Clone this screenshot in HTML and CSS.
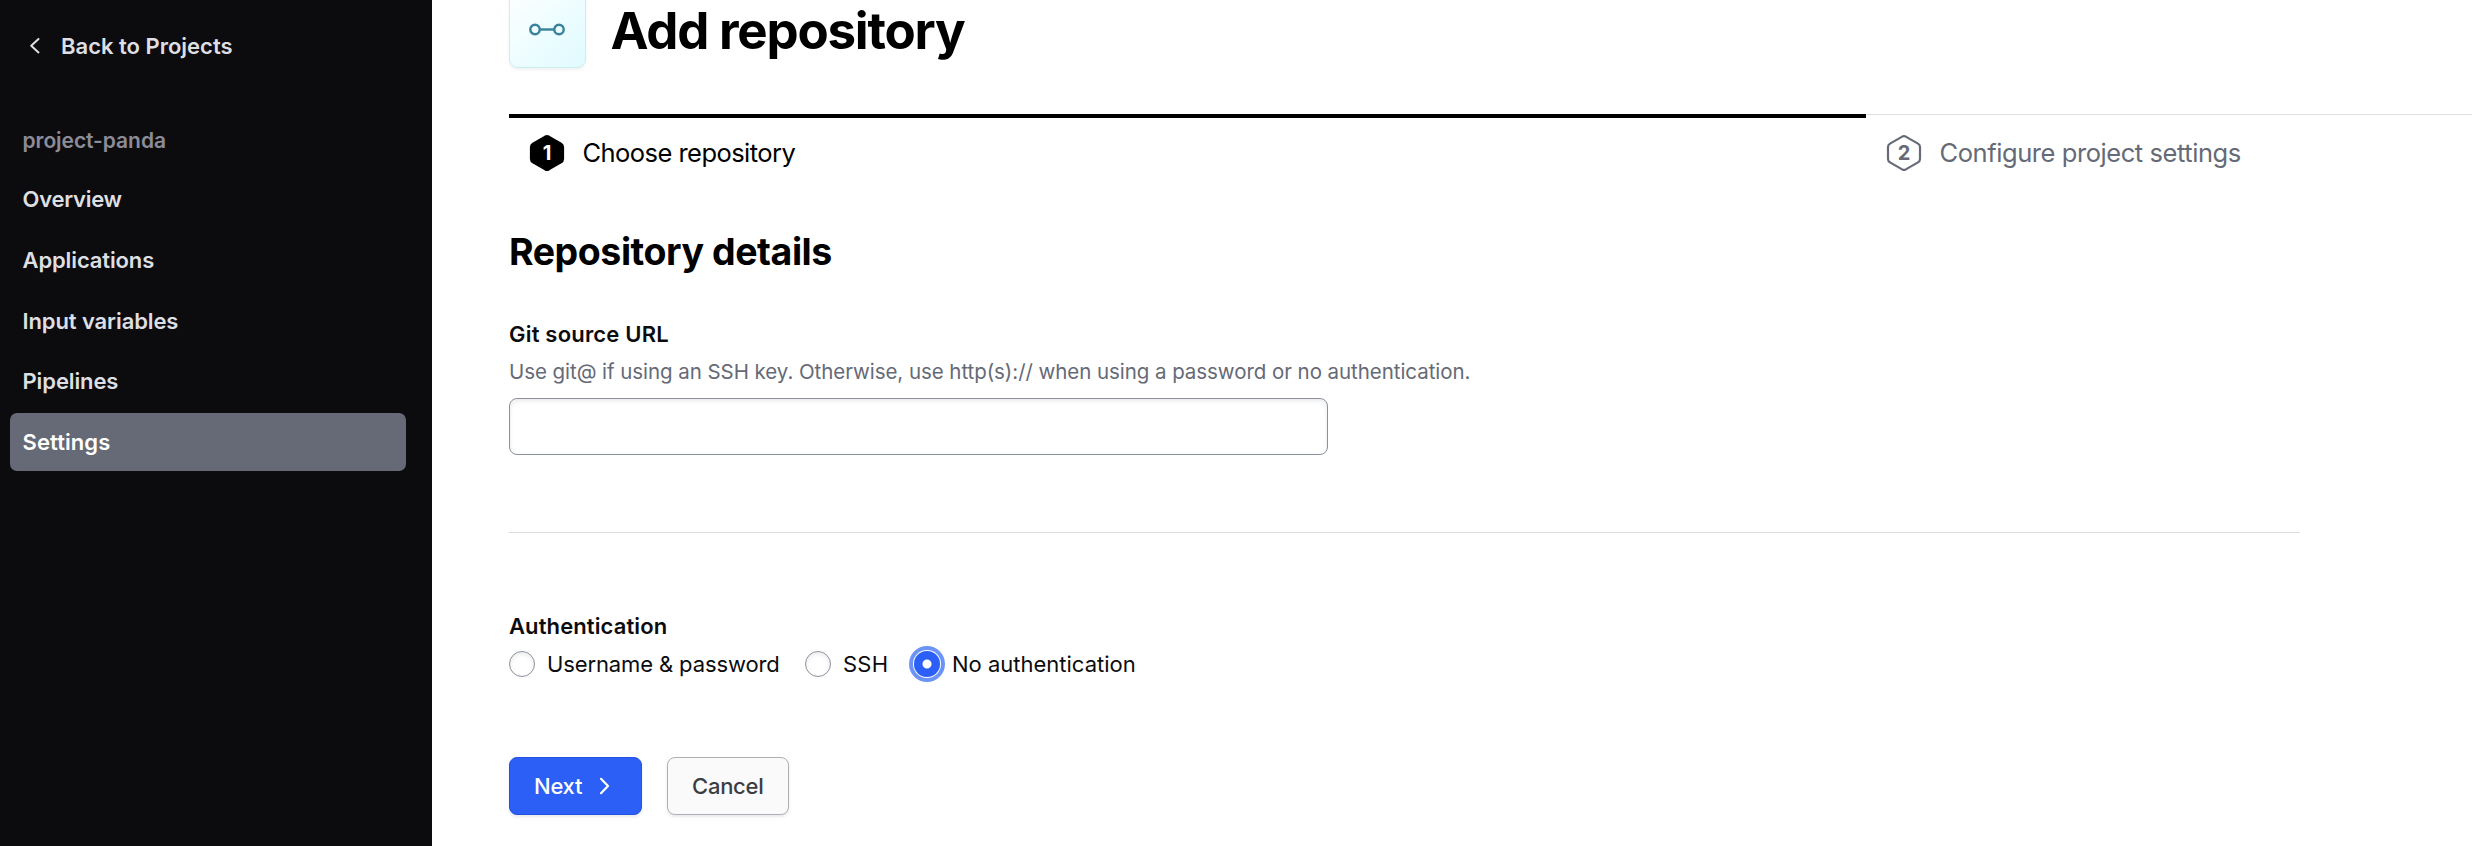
FILE: index.html
```html
<!DOCTYPE html>
<html lang="en">
<head>
<meta charset="utf-8">
<title>Add repository</title>
<link rel="stylesheet" href="styles.css">
</head>
<body>
<div class="app">
  <nav class="sidebar">
    <a class="back"><svg class="back-icon" width="12" height="18" viewBox="0 0 12 18"><path d="M9.5 2 2.2 8.7 9.5 15.4"/></svg><span>Back to Projects</span></a>
    <div class="project">project-panda</div>
    <ul class="menu">
      <li class="item"><span class="t-overview">Overview</span></li>
      <li class="item"><span class="t-apps">Applications</span></li>
      <li class="item"><span class="t-input">Input variables</span></li>
      <li class="item"><span class="t-pipe">Pipelines</span></li>
      <li class="item active"><span class="t-settings">Settings</span></li>
    </ul>
  </nav>
  <main class="main">
    <header class="header">
      <div class="tile"><svg width="36" height="14" viewBox="0 0 36 14"><circle cx="6" cy="6.5" r="4.7"/><circle cx="30" cy="6.5" r="4.7"/><path d="M10.7 6.5h14.6"/></svg></div>
      <h1>Add repository</h1>
    </header>
    <ol class="steps">
      <li class="step current">
        <svg class="hex" width="36" height="38" viewBox="0 0 36 38"><path d="M16.2 2.6a4 4 0 0 1 3.6 0l12.2 7a4 4 0 0 1 2 3.4v12a4 4 0 0 1-2 3.4l-12.2 7a4 4 0 0 1-3.6 0l-12.2-7a4 4 0 0 1-2-3.4v-12a4 4 0 0 1 2-3.4z"/><text x="18" y="25.5">1</text></svg>
        <span>Choose repository</span>
      </li>
      <li class="step">
        <svg class="hex" width="36" height="38" viewBox="0 0 36 38"><path d="M16.2 2.6a4 4 0 0 1 3.6 0l12.2 7a4 4 0 0 1 2 3.4v12a4 4 0 0 1-2 3.4l-12.2 7a4 4 0 0 1-3.6 0l-12.2-7a4 4 0 0 1-2-3.4v-12a4 4 0 0 1 2-3.4z"/><text x="18" y="25.5">2</text></svg>
        <span>Configure project settings</span>
      </li>
    </ol>
    <h2>Repository details</h2>
    <label class="label t-git" for="url">Git source URL</label>
    <p class="hint"><span>Use git@ if using an SSH key. Otherwise, use http(s):// when using a password or no authentication.</span></p>
    <input class="field" id="url" type="text">
    <hr class="divider">
    <div class="label t-auth">Authentication</div>
    <div class="radios">
      <label class="radio r-user"><i class="dot"></i><span>Username &amp; password</span></label>
      <label class="radio r-ssh"><i class="dot"></i><span>SSH</span></label>
      <label class="radio r-none"><i class="dot checked"></i><span>No authentication</span></label>
    </div>
    <div class="actions">
      <button class="btn primary"><span>Next</span><svg width="14" height="18" viewBox="0 0 14 18"><path d="M3 1.8 10 9 3 16.2"/></svg></button>
      <button class="btn secondary"><span>Cancel</span></button>
    </div>
  </main>
</div>
</body>
</html>
```
FILE: styles.css
```css
* { box-sizing: border-box; margin: 0; padding: 0; }
body { font-family: Inter, "Liberation Sans", sans-serif; background: #fff; color: #000; overflow: hidden; }
.app { display: flex; width: 2472px; height: 846px; overflow: hidden; }
ul, ol { list-style: none; }
svg { display: block; flex: none; fill: none; }
span { white-space: nowrap; }

/* Sidebar */
.sidebar { width: 432px; flex: none; background: #0c0c0e; color: #dedfe3; font-size: 22px; font-weight: 600; padding: 28px 26px 0 10px; }
.back { display: flex; align-items: center; height: 36px; padding-left: 19px; gap: 20px; }
.back-icon { stroke: #dedfe3; stroke-width: 2; stroke-linecap: round; stroke-linejoin: round; }
.project { height: 36px; line-height: 36px; margin-top: 59px; padding-left: 12.5px; color: #8c8c99; font-size: 21px; letter-spacing: -.05px; }
.menu { display: flex; flex-direction: column; gap: 2.7px; margin-top: 11.2px; }
.item { height: 58px; line-height: 58px; padding-left: 12.5px; border-radius: 7px; }
.active { background: #656a76; color: #fff; }
.t-overview { letter-spacing: -.25px; }
.t-apps { letter-spacing: -.12px; }
.t-input { letter-spacing: -.1px; }
.t-pipe { letter-spacing: -.1px; }
.t-settings { letter-spacing: .08px; }

/* Page header */
.main { flex: 1; min-width: 0; padding-left: 77px; }
.header { display: flex; height: 68px; gap: 24.5px; align-items: flex-end; }
.tile { width: 77px; height: 77px; flex: none; display: flex; align-items: center; justify-content: center; padding-right: 2px; border: 1px solid #c9eff1; border-radius: 9px; background: linear-gradient(135deg, #fcffff, #e0fbff); box-shadow: 0 2px 3px #656a7618; }
.tile svg { stroke: #39829b; stroke-width: 2.4; }
h1 { font-size: 51px; font-weight: 700; line-height: 74px; letter-spacing: -1.2px; }

/* Steps */
.steps { display: flex; margin-top: 46px; }
.step { width: 1357px; flex: none; height: 76px; padding: 19px 0 0 20px; display: flex; gap: 17.5px; border-top: 1px solid #dedfe3; color: #656a76; font-size: 25.5px; line-height: 38px; letter-spacing: -.43px; }
.step.current { border-top: 4px solid #000; padding-top: 16px; color: #000; letter-spacing: -.55px; }
.hex path { stroke: #656a76; stroke-width: 2.2; }
.hex text { fill: #656a76; font-size: 20px; font-weight: 700; letter-spacing: 0; text-anchor: middle; }
.current .hex path { fill: #000; stroke: #000; }
.current .hex text { fill: #fff; }

/* Form */
h2 { margin-top: 38px; height: 48px; line-height: 48px; font-size: 37.5px; font-weight: 700; letter-spacing: -.45px; }
.label { display: block; height: 32px; line-height: 32px; font-size: 22px; font-weight: 600; color: #0c0c0e; }
.t-git { margin-top: 42px; letter-spacing: .2px; }
.hint { height: 32px; line-height: 32px; margin-top: 6px; font-size: 20.5px; color: #656a76; letter-spacing: -.055px; }
.field { display: block; width: 819px; height: 57px; margin-top: 10px; border: 1px solid #8c909c; border-radius: 8px; background: #fff; box-shadow: inset 0 2px 4px #656a7626; }
.divider { width: 1791px; margin-top: 77px; border: 0; border-top: 1px solid #dcdde0; }
.t-auth { margin-top: 77px; letter-spacing: .1px; }
.radios { display: flex; height: 38px; margin-top: 3px; }
.radio { display: flex; align-items: center; gap: 12px; font-size: 22px; color: #0c0c0e; }
.r-user { width: 296px; letter-spacing: -.12px; }
.r-ssh { width: 109px; letter-spacing: .2px; }
.dot { width: 26px; height: 26px; flex: none; border: 1px solid #8c909c; border-radius: 50%; box-shadow: inset 0 2px 4px #656a7626; }
.checked { border: 0; background: radial-gradient(circle, #fff 4px, #2b5ff5 5px); box-shadow: 0 0 0 1px #fff, 0 0 0 5px #6b93f8; }
.actions { display: flex; gap: 25px; margin-top: 74px; }
.btn { height: 58px; border: 1px solid; border-radius: 8px; font: 500 22px Inter, "Liberation Sans", sans-serif; letter-spacing: -.25px; display: flex; align-items: center; justify-content: flex-start; padding-left: 24px; gap: 15.5px; box-shadow: 0 2px 3px #656a7626; }
.primary { width: 133px; background: #2b5ff5; border-color: #2453dd; color: #fff; }
.primary svg { stroke: #fff; stroke-width: 2.2; stroke-linecap: round; stroke-linejoin: round; }
.secondary { width: 122px; background: #fafafa; border-color: #aeb0b5; color: #3b3d45; }
```
